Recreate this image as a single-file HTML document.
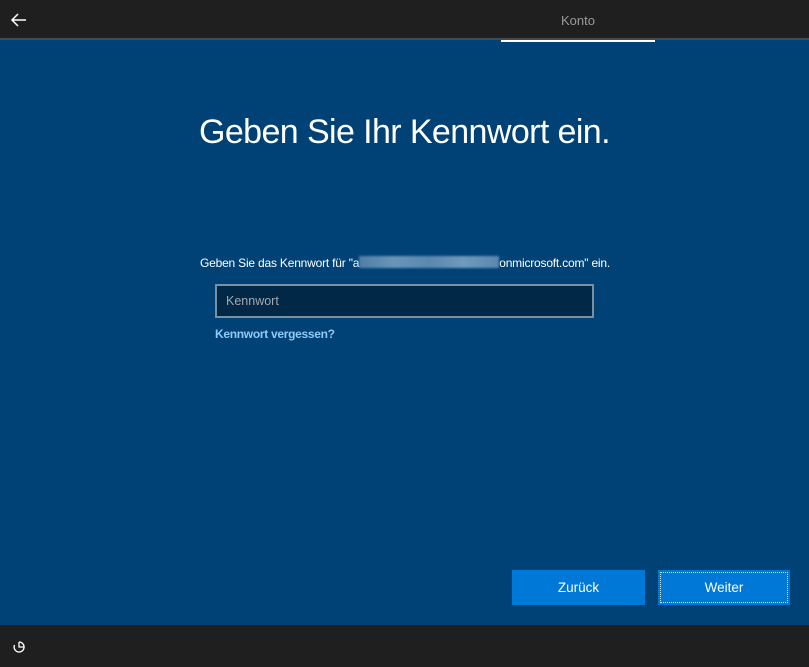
<!DOCTYPE html>
<html><head><meta charset="utf-8"><style>
*{margin:0;padding:0;box-sizing:border-box}
body{width:809px;height:667px;background:#004275;font-family:"Liberation Sans",sans-serif;position:relative;overflow:hidden;color:#fff}
.top{position:absolute;left:0;top:0;width:809px;height:40px;background:#1f1f1f;border-bottom:2px solid #4a4a4a}
.tab{position:absolute;left:501px;top:0;width:154px;height:42px;border-bottom:2px solid #fff;text-align:center;line-height:42px;font-size:13px;color:#9a9a9a}
.foot{position:absolute;left:0;top:625px;width:809px;height:42px;background:#1f1f1f}
h1{position:absolute;left:0;width:809px;top:113px;text-align:center;font-weight:normal;font-size:34px;letter-spacing:-0.6px}
.lbl{position:absolute;left:200px;top:256px;font-size:12px;white-space:nowrap;letter-spacing:-0.2px}
.blur{display:inline-block;width:140px;height:12px;background:linear-gradient(90deg,#4f7ea6,#6a95b8,#5a88af,#7099bd,#5a88af);vertical-align:-1px;filter:blur(1px)}
.inp{position:absolute;left:215px;top:284px;width:379px;height:34px;background:#012846;border:2px solid #7b8fa2;font-size:12.5px;color:#a2a9b1;padding-left:9px;line-height:30px}
.link{position:absolute;left:215px;top:327px;font-size:12px;font-weight:bold;color:#8fc9f5;letter-spacing:-0.3px}
.btn{position:absolute;top:570px;height:35px;width:133px;background:#0078d7;font-size:13.5px;text-align:center;line-height:35px}
.w{outline:1px dotted #cfe3f5;outline-offset:-3px}
</style></head><body>
<div class="top">
<svg style="position:absolute;left:10px;top:12px" width="18" height="16" viewBox="0 0 18 16"><path d="M16 8H2M8 2L2 8L8 14" stroke="#fff" stroke-width="1.5" fill="none"/></svg>
</div>
<div class="tab">Konto</div>
<h1>Geben Sie Ihr Kennwort ein.</h1>
<div class="lbl">Geben Sie das Kennwort für "a<span class="blur"></span>onmicrosoft.com" ein.</div>
<div class="inp">Kennwort</div>
<div class="link">Kennwort vergessen?</div>
<div class="btn" style="left:512px">Zurück</div>
<div class="btn w" style="left:658px;width:132px">Weiter</div>
<div class="foot">
<svg style="position:absolute;left:12px;top:15px" width="14" height="14" viewBox="0 0 14 14"><path d="M7 2A5 5 0 1 1 2.5 5" stroke="#fff" stroke-width="1.3" fill="none"/><path d="M7 2V7H12" stroke="#fff" stroke-width="1.3" fill="none"/></svg>
</div>
</body></html>
